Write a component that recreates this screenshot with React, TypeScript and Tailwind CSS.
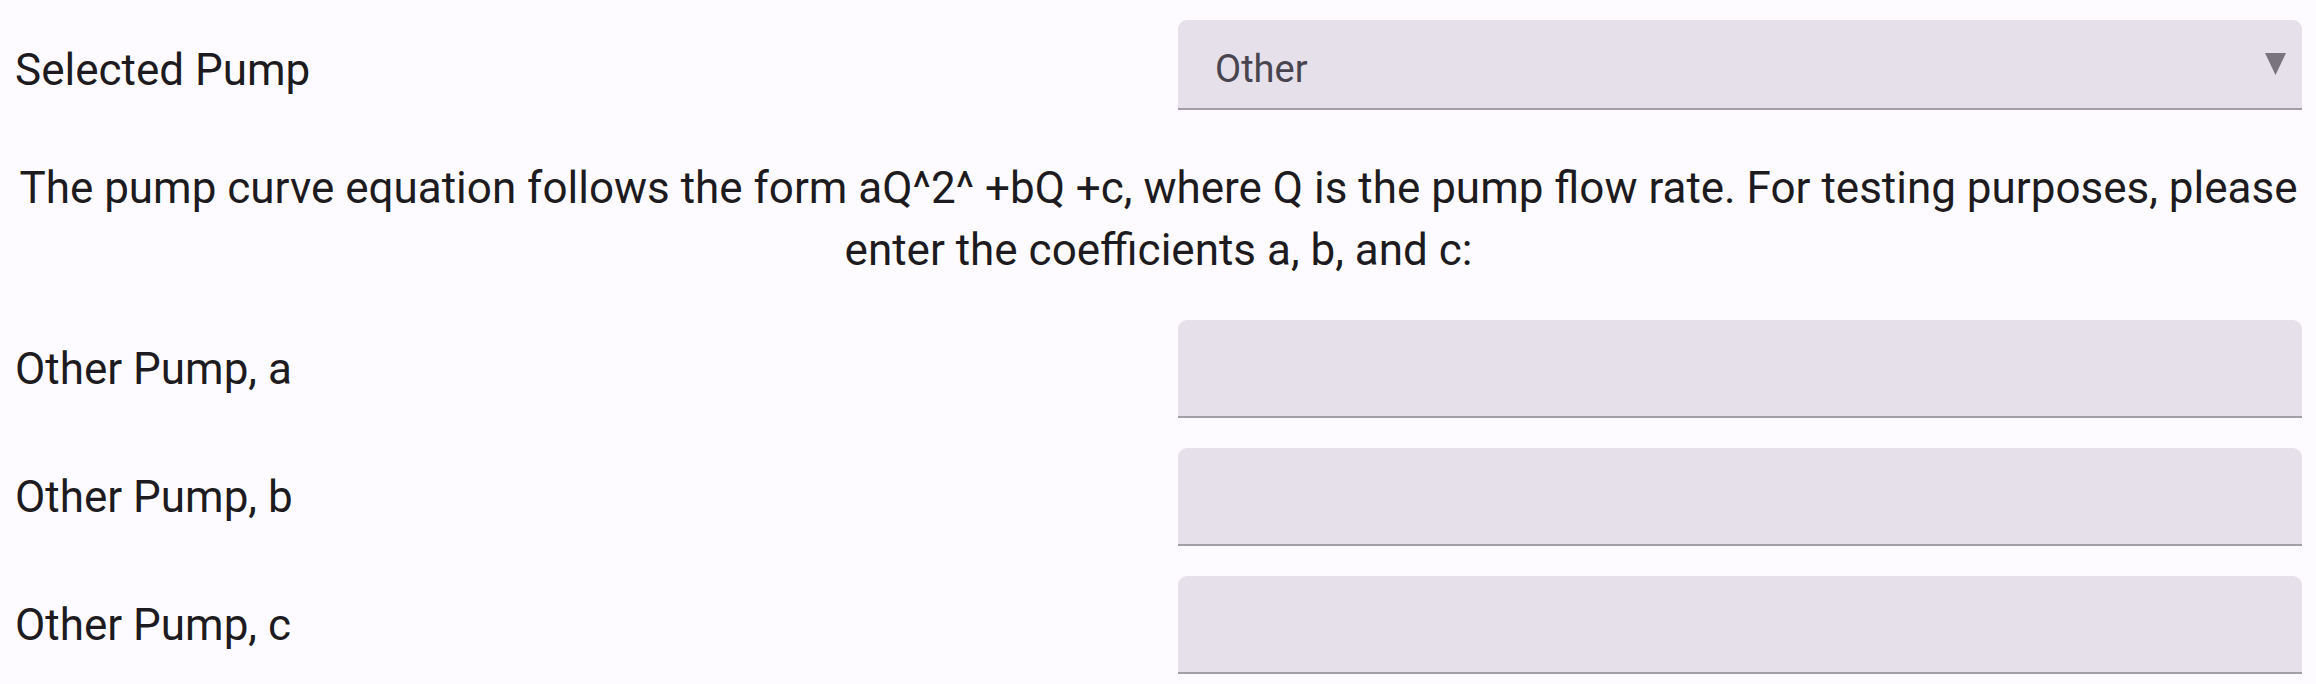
import React from "react";

const fields = ["Other Pump, a", "Other Pump, b", "Other Pump, c"];

function DropArrow() {
  return (
    <svg width="21" height="22" viewBox="0 0 21 22" aria-hidden>
      <polygon points="0,0 21,0 10.5,22" fill="#79747e" />
    </svg>
  );
}

export default function App() {
  return (
    <div className="min-h-screen bg-[#fdfbff] pl-[15px] pr-[14px] pt-[20px] font-['Roboto',sans-serif] text-[#1d1b20]">
      <div className="grid grid-cols-[1fr_1124px] items-center">
        <label className="mt-[10px] text-[44px] leading-[1.5]">Selected Pump</label>
        <div className="flex h-[90px] items-center justify-between rounded-t-[9px] border-b-2 border-[#a29ea8] bg-[#e6e0eb] pl-[37px] pr-[16px]">
          <span className="mt-[10px] text-[38px] text-[#49454f]">Other</span>
          <DropArrow />
        </div>
      </div>

      <p className="mt-[47px] mb-[39px] text-center text-[44px] leading-[62px] font-stretch-[92%]">
        The pump curve equation follows the form aQ^2^ +bQ +c, where Q is the pump flow rate. For testing purposes, please enter the coefficients a, b, and c:
      </p>

      <div className="grid grid-cols-[1fr_1124px] items-center gap-y-[30px]">
        {fields.map((f) => (
          <React.Fragment key={f}>
            <label className="text-[44px] leading-[1.5]">{f}</label>
            <input
              type="text"
              aria-label={f}
              className="h-[98px] w-full rounded-t-[9px] border-b-2 border-[#a29ea8] bg-[#e6e0eb] px-[37px] text-[38px] outline-none"
            />
          </React.Fragment>
        ))}
      </div>
    </div>
  );
}
